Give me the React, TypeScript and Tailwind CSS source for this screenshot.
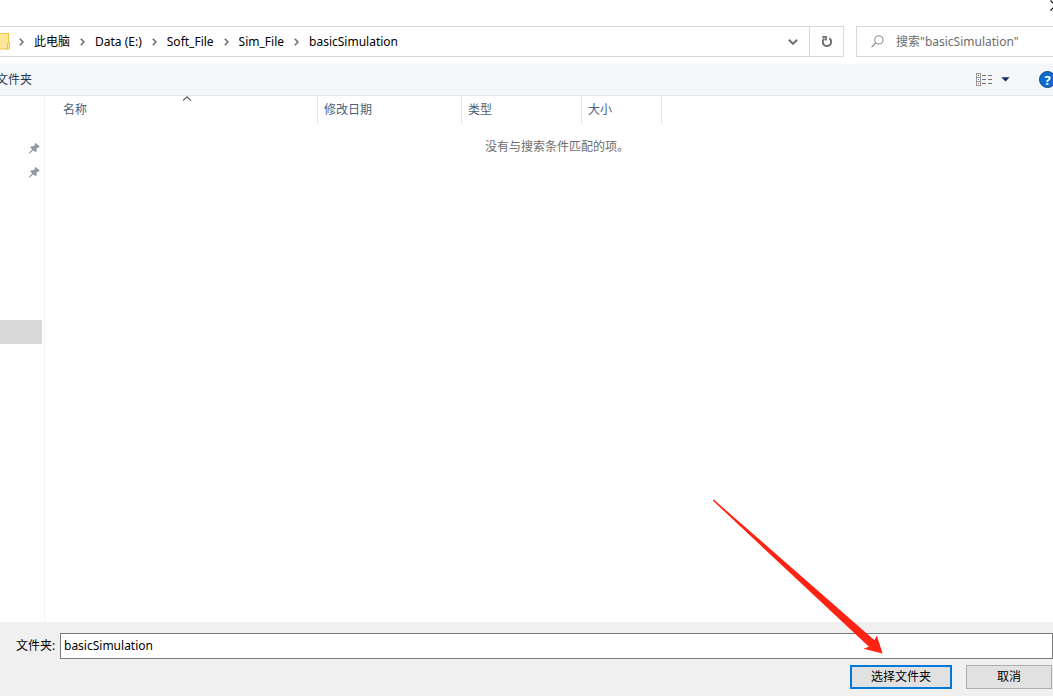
import React from "react";

const crumbs = ["此电脑", "Data (E:)", "Soft_File", "Sim_File", "basicSimulation"];

function CrumbChevron() {
  return (
    <svg width="5" height="8" viewBox="0 0 5 8" fill="none" aria-hidden="true">
      <path d="M0.8 0.8 L3.9 4 L0.8 7.2" stroke="#707070" strokeWidth="1.6" />
    </svg>
  );
}

function FolderIcon() {
  return (
    <svg width="10" height="17" viewBox="0 0 10 17" aria-hidden="true">
      <rect x="-4" y="0.5" width="12.5" height="15.5" fill="#ffe79a" stroke="#ebc54c" />
      <path d="M7.5 16.5 V10 L9.5 9 V15.5 Z" fill="#ffe79a" stroke="#ebc54c" />
    </svg>
  );
}

function RefreshIcon() {
  return (
    <svg width="12" height="13" viewBox="0 0 12 13" fill="none" aria-hidden="true">
      <path d="M8.3 3.4 A4.2 4.2 0 1 1 3.4 3.6" stroke="#707070" strokeWidth="2" />
      <path d="M1.2 1.9 H5 V5.6" stroke="#707070" strokeWidth="1.8" />
    </svg>
  );
}

function SearchIcon() {
  return (
    <svg width="13" height="13" viewBox="0 0 13 13" fill="none" aria-hidden="true">
      <circle cx="7.9" cy="4.9" r="4.1" stroke="#858585" />
      <path d="M4.9 7.9 L0.6 12.2" stroke="#858585" strokeWidth="1.2" />
    </svg>
  );
}

function DetailsViewIcon() {
  return (
    <svg width="17" height="13" viewBox="0 0 17 13" shapeRendering="crispEdges" aria-hidden="true">
      <rect x="0.5" y="0.5" width="4" height="12" fill="#ffffff" stroke="#979797" />
      <path d="M1 4.5 H4 M1 8.5 H4" stroke="#979797" />
      <rect x="2" y="2" width="1" height="1" fill="#555555" />
      <rect x="2" y="6" width="1" height="1" fill="#2c7be0" />
      <rect x="2" y="10" width="1" height="1" fill="#e02020" />
      <path d="M6 2.5 H10 M12 2.5 H16 M6 6.5 H10 M12 6.5 H16 M6 10.5 H10 M12 10.5 H16" stroke="#777777" />
    </svg>
  );
}

function PinIcon() {
  return (
    <svg width="11" height="11" viewBox="0 0 11 11" fill="#8d9aa3" aria-hidden="true">
      <path d="M6.4 0 L10.8 3.6 L9.8 4.6 L8.9 4.5 L7.4 6.1 L7.6 8.1 L6.4 9.2 L4.2 7.3 L0.8 10.6 L0 10.4 L0.2 9.5 L3.2 6.3 L1.2 4.4 L2.2 3.3 L4.6 3.3 L6 1.9 L5.7 0.8 Z" />
    </svg>
  );
}

function PointerArrow() {
  return (
    <svg
      className="pointer-events-none absolute bottom-full right-[68px] mb-[10px]"
      width="172"
      height="156"
      viewBox="0 0 172 156"
      aria-hidden="true"
    >
      <path
        d="M0.8 1.6 L1.8 0.6 L162.5 141.2 L164.8 136.6 L170.6 154.6 L151.5 149.8 L157 147.8 Z"
        fill="#ff2314"
      />
    </svg>
  );
}

export default function App() {
  return (
    <div className="flex min-h-screen flex-col overflow-hidden bg-white font-['Noto_Sans','Noto_Sans_CJK_SC',sans-serif] text-xs text-black">
      <header className="flex h-[26px] items-start justify-end overflow-hidden">
        <button type="button" aria-label="关闭" className="-mr-2">
          <svg width="11" height="11" viewBox="0 0 11 11" fill="none" aria-hidden="true">
            <path d="M0.5 0.5 L10.5 10.5 M10.5 0.5 L0.5 10.5" stroke="#000000" strokeWidth="1.1" />
          </svg>
        </button>
      </header>

      <div className="flex h-[31px] gap-3">
        <div className="flex min-w-0 flex-1 border border-l-0 border-[#d9d9d9]">
          <nav aria-label="路径" className="flex min-w-0 flex-1 items-center">
            <FolderIcon />
            <ol className="flex items-center pl-[9px]">
              {crumbs.map((name) => (
                <li key={name} className="flex items-center">
                  <CrumbChevron />
                  <button type="button" className="whitespace-nowrap px-[10px] leading-4">
                    {name}
                  </button>
                </li>
              ))}
            </ol>
          </nav>
          <button type="button" aria-label="以前的位置" className="flex w-8 items-center justify-center">
            <svg width="10" height="6" viewBox="0 0 10 6" fill="none" aria-hidden="true">
              <path d="M0.8 0.8 L5 4.8 L9.2 0.8" stroke="#707070" strokeWidth="2" />
            </svg>
          </button>
          <button
            type="button"
            aria-label="刷新"
            className="flex w-[34px] items-center justify-center border-l border-[#d9d9d9]"
          >
            <RefreshIcon />
          </button>
        </div>
        <label className="flex w-[197px] items-center gap-3 border border-r-0 border-[#d9d9d9] pl-[14px]">
          <SearchIcon />
          <input
            type="search"
            aria-label="搜索"
            placeholder={'搜索"basicSimulation"'}
            className="min-w-0 flex-1 bg-transparent leading-4 outline-none placeholder:text-[#6d6d6d]"
          />
        </label>
      </div>

      <div className="mt-[7px] flex h-8 items-center justify-between border-b border-[#e5e8eb] bg-[#f4f6f8]">
        <button type="button" className="-ml-1 leading-4 text-[#1e395b]">
          文件夹
        </button>
        <div className="flex items-center">
          <button type="button" aria-label="更改视图">
            <DetailsViewIcon />
          </button>
          <button type="button" aria-label="更多选项" className="ml-2">
            <svg width="9" height="5" viewBox="0 0 9 5" aria-hidden="true">
              <path d="M0.3 0.3 H8.7 L4.5 4.6 Z" fill="#17305a" />
            </svg>
          </button>
          <button
            type="button"
            aria-label="帮助"
            className="-mr-[3px] ml-[29px] flex size-[17px] items-center justify-center rounded-full border border-[#0c4a86] bg-[#0a6cce] text-[13px] font-bold leading-4 text-white"
          >
            ?
          </button>
        </div>
      </div>

      <main className="flex flex-1">
        <aside className="w-[45px] border-r border-[#f3f3f3] pt-10">
          <ul>
            <li className="flex h-6 items-center justify-end pr-1">
              <PinIcon />
            </li>
            <li className="flex h-6 items-center justify-end pr-1">
              <PinIcon />
            </li>
            <li className="mr-[2px] mt-34 h-6 bg-[#d9d9d9]" />
          </ul>
        </aside>
        <div className="flex-1">
          <table className="w-full table-fixed border-separate border-spacing-0 text-left">
            <colgroup>
              <col className="w-[273px]" />
              <col className="w-36" />
              <col className="w-30" />
              <col className="w-20" />
              <col />
            </colgroup>
            <thead>
              <tr className="h-7 text-[#4c607a]">
                <th scope="col" className="border-r border-[#e5e5e5] p-0 pl-3 font-normal">
                  <div className="relative flex h-7 items-center pl-[6px]">
                    名称
                    <svg
                      className="absolute left-1/2 top-0 -translate-x-1/2"
                      width="9"
                      height="5"
                      viewBox="0 0 9 5"
                      fill="none"
                      aria-hidden="true"
                    >
                      <path d="M0.5 4.6 L4.5 0.8 L8.5 4.6" stroke="#555555" strokeWidth="1.1" />
                    </svg>
                  </div>
                </th>
                <th scope="col" className="border-r border-[#e5e5e5] p-0 pl-[6px] font-normal">
                  修改日期
                </th>
                <th scope="col" className="border-r border-[#e5e5e5] p-0 pl-[6px] font-normal">
                  类型
                </th>
                <th scope="col" className="border-r border-[#e5e5e5] p-0 pl-[6px] font-normal">
                  大小
                </th>
                <td className="p-0" />
              </tr>
            </thead>
            <tbody>
              <tr>
                <td colSpan={5} className="p-0 pl-4 pt-[15px] text-center leading-4 text-[#6d6d6d]">
                  没有与搜索条件匹配的项。
                </td>
              </tr>
            </tbody>
          </table>
        </div>
      </main>

      <footer className="bg-[#f0f0f0] pb-[7px] pt-[11px]">
        <div className="flex items-center">
          <label htmlFor="folder" className="w-15 whitespace-nowrap pl-4">
            文件夹:
          </label>
          <input
            id="folder"
            type="text"
            defaultValue="basicSimulation"
            className="h-[26px] min-w-0 flex-1 border border-[#7a7a7a] bg-white px-[3px] pb-[2px] outline-none"
          />
        </div>
        <div className="mt-[6px] flex justify-end gap-[14px] pr-px">
          <div className="relative">
            <button type="button" className="h-6 w-[102px] border-2 border-[#0078d7] bg-[#e1e1e1]">
              选择文件夹
            </button>
            <PointerArrow />
          </div>
          <button type="button" className="h-6 w-[86px] border border-[#adadad] bg-[#e1e1e1]">
            取消
          </button>
        </div>
      </footer>
    </div>
  );
}
